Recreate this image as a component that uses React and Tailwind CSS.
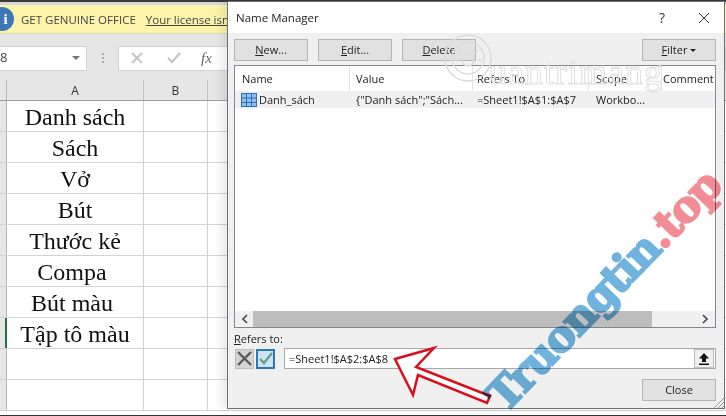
import React from 'react';

const rows = ['Danh sách', 'Sách', 'Vở', 'Bút', 'Thước kẻ', 'Compa', 'Bút màu', 'Tập tô màu', '', ''];
const uiFont = 'font-["Open_Sans","Noto_Sans",sans-serif]';

const Sheet = () => (
  <div className={`flex flex-col w-full h-full bg-[#e6e6e6] ${uiFont}`}>
    <div className="h-[2px] bg-[#3a3a3a]" />
    <div className="h-[3px] bg-[#d8d8d8]" />
    <div className="h-[29px] bg-[#fdf4ab] border-b border-[#dcd9b8] flex items-center overflow-hidden">
      <div className="w-[24px] h-[24px] rounded-full bg-[#3f76b5] ml-[-10px] shrink-0 flex items-center justify-center text-white text-[15px] font-bold font-['Liberation_Serif',serif] pl-[7px]">i</div>
      <span className="ml-[7px] pt-[2px] text-[11.5px] text-[#444] whitespace-nowrap">GET GENUINE OFFICE</span>
      <span className="ml-[10px] pt-[2px] text-[11.5px] text-[#444] underline whitespace-nowrap">Your license isn't genuine</span>
    </div>
    <div className="h-[46px] flex items-center pt-[2px] bg-[#e6e6e6]">
      <div className="w-[87px] h-[25px] bg-white border border-[#d4d4d4] border-l-0 flex items-center justify-between pr-[6px] text-[13px] text-[#444]">
        <span>8</span>
        <span className="w-0 h-0 border-x-[4px] border-x-transparent border-t-[4px] border-t-[#777]" />
      </div>
      <div className="w-[31px] flex flex-col items-center gap-[2px]">
        <span className="w-[2px] h-[2px] bg-[#aaa]" />
        <span className="w-[2px] h-[2px] bg-[#aaa]" />
        <span className="w-[2px] h-[2px] bg-[#aaa]" />
      </div>
      <div className="flex-1 h-[25px] bg-white border border-[#d4d4d4] flex items-center pl-[12px] text-[#bbb]">
        <svg width="12" height="12" viewBox="0 0 12 12" fill="none" stroke="#c4c4c4" strokeWidth="1.8"><path d="M1 1l10 10M11 1L1 11" /></svg>
        <svg className="ml-[24px]" width="14" height="12" viewBox="0 0 14 12" fill="none" stroke="#c4c4c4" strokeWidth="2.2"><path d="M1 6l4 4 8-9" /></svg>
        <span className="ml-[20px] text-[15px] italic font-['Liberation_Serif',serif] text-[#666]">fx</span>
      </div>
    </div>
    <div className="h-[21px] flex text-[12px] text-[#333] border-b border-[#9f9f9f]">
      <div className="w-[7px] border-r border-[#b5b5b5]" />
      <div className="w-[137px] pt-[2px] border-r border-[#c4c4c4] flex items-center justify-center">A</div>
      <div className="w-[64px] pt-[2px] border-r border-[#c4c4c4] flex items-center justify-center">B</div>
      <div className="flex-1" />
    </div>
    <div className="flex-1 bg-white overflow-hidden">
      {rows.map((row, i) => (
        <div key={i} className="h-[31px] flex border-b border-[#d2d2d2]">
          <div className={`w-[7px] shrink-0 bg-[#e6e6e6] border-r ${i === 7 ? 'border-r-2 border-[#217346]' : 'border-[#b5b5b5]'}`} />
          <div className={`w-[137px] pt-[2px] border-r border-[#d2d2d2] flex items-center justify-center font-['Liberation_Serif',serif] text-[24px] leading-none text-[#111] whitespace-nowrap ${i === 5 || i === 6 ? 'pr-[6px]' : ''}`}>{row}</div>
          <div className="w-[64px] border-r border-[#d2d2d2]" />
          <div className="flex-1" />
        </div>
      ))}
    </div>
    <div className="h-[1px] bg-[#333]" />
  </div>
);

const DialogButton = ({ children, className = '' }) => (
  <button className={`h-[22px] w-[74px] bg-[#e1e1e1] border border-[#b4b4b4] text-[11px] text-[#222] flex items-center justify-center ${className}`}>
    {children}
  </button>
);

const NameManager = () => (
  <div className={`absolute left-[227px] top-[1px] w-[498px] h-[408px] flex flex-col bg-[#f0f0f0] border border-[#6f6f6f] shadow-[-6px_0_8px_rgba(0,0,0,0.08)] ${uiFont} text-[11px] text-[#222]`}>
    <div className="h-[31px] bg-white flex items-center shrink-0 pl-[8px] pr-[14px]">
      <span className="text-[11.5px] text-[#222]">Name Manager</span>
      <span className="ml-auto text-[14px] text-[#333]">?</span>
      <svg className="ml-[33px]" width="12" height="12" viewBox="0 0 12 12" fill="none" stroke="#333" strokeWidth="1"><path d="M1 1l10 10M11 1L1 11" /></svg>
    </div>
    <div className="flex-1 flex flex-col pl-[6px] pr-[8px] pt-[6px] pb-[7px] min-h-0">
      <div className="flex gap-[10px] shrink-0">
        <DialogButton><span><u>N</u>ew...</span></DialogButton>
        <DialogButton><span><u>E</u>dit...</span></DialogButton>
        <DialogButton><span><u>D</u>elete</span></DialogButton>
        <DialogButton className="ml-auto w-[72px] bg-[#dcdcdc]">
          <span><u>F</u>ilter</span>
          <span className="ml-[3px] w-0 h-0 border-x-[3px] border-x-transparent border-t-[3px] border-t-[#222]" />
        </DialogButton>
      </div>
      <div className="mt-[4px] h-[263px] shrink-0 bg-white border border-[#828790] flex flex-col">
        <div className="h-[25px] flex items-center shrink-0">
          <div className="w-[115px] pl-[7px] pt-[2px] h-full flex items-center border-r border-[#e5e5e5]">Name</div>
          <div className="w-[123px] pl-[6px] pt-[2px] h-full flex items-center border-r border-[#e5e5e5]">Value</div>
          <div className="w-[116px] pl-[4px] pt-[2px] h-full flex items-center border-r border-[#e5e5e5]">Refers To</div>
          <div className="w-[73px] pl-[7px] pt-[2px] h-full flex items-center border-r border-[#e5e5e5]">Scope</div>
          <div className="pl-[1px] pt-[2px]">Comment</div>
        </div>
        <div className="h-[17px] flex items-center bg-[#f0f0f0] shrink-0 whitespace-nowrap">
          <div className="w-[115px] pl-[6px] flex items-center gap-[2px]">
            <svg width="16" height="14" viewBox="0 0 16 14">
              <rect x="0.5" y="0.5" width="15" height="13" fill="#8fc1ee" stroke="#2f6fb5" />
              <path d="M0 5h16M0 9.500h16M5.500 0v14M10.500 0v14" stroke="#2f6fb5" strokeWidth="1" />
            </svg>
            <span className="pt-[1px]">Danh_sách</span>
          </div>
          <div className="w-[123px] pl-[6px] pt-[1px]">{'{"Danh sách";"Sách...'}</div>
          <div className="w-[116px] pl-[4px] pt-[1px]">=Sheet1!$A$1:$A$7</div>
          <div className="w-[73px] pl-[7px] pt-[1px]">Workbo...</div>
        </div>
        <div className="flex-1" />
        <div className="h-[16px] flex items-stretch bg-[#f0f0f0] shrink-0">
          <div className="w-[18px] flex items-center justify-center">
            <svg width="7" height="10" viewBox="0 0 7 10" fill="none" stroke="#444" strokeWidth="1.6"><path d="M6 1L2 5l4 4" /></svg>
          </div>
          <div className="w-[399px] bg-[#bdbdbd]" />
          <div className="flex-1 flex items-center justify-end pr-[6px]">
            <svg width="7" height="10" viewBox="0 0 7 10" fill="none" stroke="#444" strokeWidth="1.6"><path d="M1 1l4 4-4 4" /></svg>
          </div>
        </div>
      </div>
      <div className="mt-[3px] h-[16px] leading-[16px] shrink-0"><u>R</u>efers to:</div>
      <div className="mt-[1px] h-[21px] flex items-center shrink-0">
        <div className="w-[19px] h-[20px] ml-[1px] bg-[#d4d4d4] border border-[#bdbdbd] flex items-center justify-center">
          <svg width="15" height="15" viewBox="0 0 15 15" fill="none" stroke="#5a5a5a" strokeWidth="2.4"><path d="M1 1l13 13M14 1L1 14" /></svg>
        </div>
        <div className="w-[19px] h-[20px] ml-[2px] bg-[#cfe3f3] border-2 border-[#2a78b8] flex items-center justify-center">
          <svg width="14" height="13" viewBox="0 0 14 13" fill="none" stroke="#5d9e8e" strokeWidth="2.4"><path d="M1 7l4 4 8-10" /></svg>
        </div>
        <div className="ml-[9px] flex-1 h-[21px] bg-white border border-[#a9a9a9] flex items-center pl-[4px] pr-[1px]">
          <span className="pt-[1px]">=Sheet1!$A$2:$A$8</span>
          <div className="ml-auto w-[20px] h-[19px] bg-[#f0f0f0] border border-[#bdbdbd] flex items-center justify-center">
            <svg width="10" height="12" viewBox="0 0 10 12" fill="#111"><path d="M5 0L10 5.500H7V9H3V5.500H0zM0 10.500h10V12H0z" /></svg>
          </div>
        </div>
      </div>
      <DialogButton className="ml-auto mt-auto">Close</DialogButton>
    </div>
    <svg className="absolute right-0 bottom-0" width="10" height="10" viewBox="0 0 10 10" stroke="#9a9a9a" strokeWidth="1"><path d="M10 0L0 10M10 4L4 10M10 8L8 10" /></svg>
  </div>
);

const Watermarks = () => (
  <>
    <svg className="absolute left-[440px] top-[34px] pointer-events-none" width="60" height="60" viewBox="0 0 60 60" fill="none" stroke="#dcdcdc" strokeWidth="1.500">
      <circle cx="28" cy="24" r="23" />
      <circle cx="28" cy="24" r="16" />
      <circle cx="28" cy="26" r="6" />
      <path d="M28 12v4M18 16l3 3M38 16l-3 3M14 26h4M38 26h4" />
    </svg>
    <div className="absolute left-[489px] top-[54px] text-[36px] leading-none text-transparent [-webkit-text-stroke:1px_#e0e0e0] font-['Liberation_Serif',serif] tracking-[1px] pointer-events-none">uantrimang</div>
    <svg className="absolute left-0 top-0 pointer-events-none" width="726" height="416" fill="#fff" stroke="#d9101c" strokeWidth="2.5" strokeLinejoin="miter">
      <path d="M395 359L434 348 416 367 490 396 487 403 418 375 413 395z" fill="#fff" />
    </svg>
    <div className="absolute left-[604px] top-[291px] -translate-x-1/2 -translate-y-1/2 rotate-[-46deg] whitespace-nowrap font-['DejaVu_Serif',serif] font-bold text-[43px] leading-none tracking-[-1.500px] [-webkit-text-stroke:2px_currentColor] mix-blend-multiply pointer-events-none">
      <span className="text-[#6fb3de]">Truongtin</span>
      <span className="text-[#f28d96]">.top</span>
    </div>
  </>
);

export default function App() {
  return (
    <div className="relative w-[726px] h-[416px] overflow-hidden bg-white">
      <Sheet />
      <NameManager />
      <Watermarks />
    </div>
  );
}
